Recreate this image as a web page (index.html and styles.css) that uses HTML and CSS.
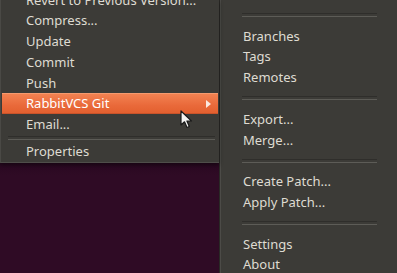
FILE: index.html
```html
<!DOCTYPE html>
<html lang="en">
<head>
    <meta charset="UTF-8">
    <title>RabbitVCS menu</title>
    <link rel="stylesheet" href="styles.css">
</head>
<body>
    <div class="left">
        <div class="menu main-menu">
            <div class="list">
                <div class="item">Revert to Previous Version...</div>
                <div class="item">Compress...</div>
                <div class="item">Update</div>
                <div class="item">Commit</div>
                <div class="item">Push</div>
                <div class="item active">RabbitVCS Git <span class="arrow"></span></div>
                <div class="item">Email...</div>
                <div class="sep small"></div>
                <div class="item">Properties</div>
            </div>
        </div>
        <div class="desktop"></div>
    </div>

    <div class="menu sub-menu">
        <div class="list">
            <div class="item">Checkout...</div>
            <div class="sep"></div>
            <div class="item">Branches</div>
            <div class="item">Tags</div>
            <div class="item">Remotes</div>
            <div class="sep"></div>
            <div class="item">Export...</div>
            <div class="item">Merge...</div>
            <div class="sep"></div>
            <div class="item">Create Patch...</div>
            <div class="item">Apply Patch...</div>
            <div class="sep"></div>
            <div class="item">Settings</div>
            <div class="item">About</div>
        </div>
    </div>

    <!-- mouse pointer -->
    <svg class="cursor" width="14" height="20" viewBox="0 0 14 20">
        <path d="M1 1 L1 15 L4.5 11.8 L7 17.5 L9.3 16.5 L6.9 11 L11.5 11 Z" fill="#f4f4f2" stroke="#1a1a1a" stroke-width="1.2" stroke-linejoin="round"/>
    </svg>
</body>
</html>
```

FILE: styles.css
```css
* {
    margin: 0;
    padding: 0;
    box-sizing: border-box;
}
body {
    width: 397px;
    height: 273px;
    overflow: hidden;
    display: flex;
    background-color: #2d0a23;
    font-family: "Noto Sans", "DejaVu Sans", sans-serif;
    font-size: 13px;
    color: #dfdbd2;
    position: relative;
}
.left {
    width: 219px;
    display: flex;
    flex-direction: column;
}
.menu {
    background-color: #3c3b37;
    overflow: hidden;
}
.main-menu {
    height: 163px;
    border-left: 1px solid #4a4945;
    border-bottom: 1px solid #4f4e4a;
    padding: 0 1px 0 1px;
    box-shadow: 0 2px 4px rgba(0,0,0,0.45);
    position: relative;
    z-index: 2;
}
.main-menu .list {
    margin-top: -10.5px;
}
.desktop {
    flex: 1;
    background: linear-gradient(#280820, #2f0b25 12px, #2f0b25);
}
.item {
    height: 20.75px;
    line-height: 20.75px;
    padding-left: 24px;
    white-space: nowrap;
}
.item.active {
    color: #ffffff;
    background: linear-gradient(#f38453, #e9693a 60%, #e25f2e);
    box-shadow: inset 0 1px 0 #f59a6e, inset 0 -1px 0 #c9532a;
    display: flex;
    justify-content: space-between;
    align-items: center;
    padding-right: 7px;
}
.arrow {
    width: 0;
    height: 0;
    border-top: 4px solid transparent;
    border-bottom: 4px solid transparent;
    border-left: 5px solid #fbe9e0;
}
.sep {
    height: 20.9px;
    display: flex;
    align-items: center;
    padding: 0 20px 0 22px;
}
.sep::after {
    content: "";
    flex: 1;
    height: 2px;
    border-top: 1px solid #2f2e2b;
    border-bottom: 1px solid #5d5c57;
}
.sep.small {
    height: 6.5px;
    padding: 0 3px 0 6px;
}
.sub-menu {
    flex: 1;
    border-left: 1px solid #2a2926;
    box-shadow: inset 1px 0 0 #4c4b47;
}
.sub-menu .list {
    margin-top: -16px;
}
.sub-menu .item {
    padding-left: 23px;
}
.cursor {
    position: absolute;
    left: 180px;
    top: 110px;
    z-index: 5;
}
```
